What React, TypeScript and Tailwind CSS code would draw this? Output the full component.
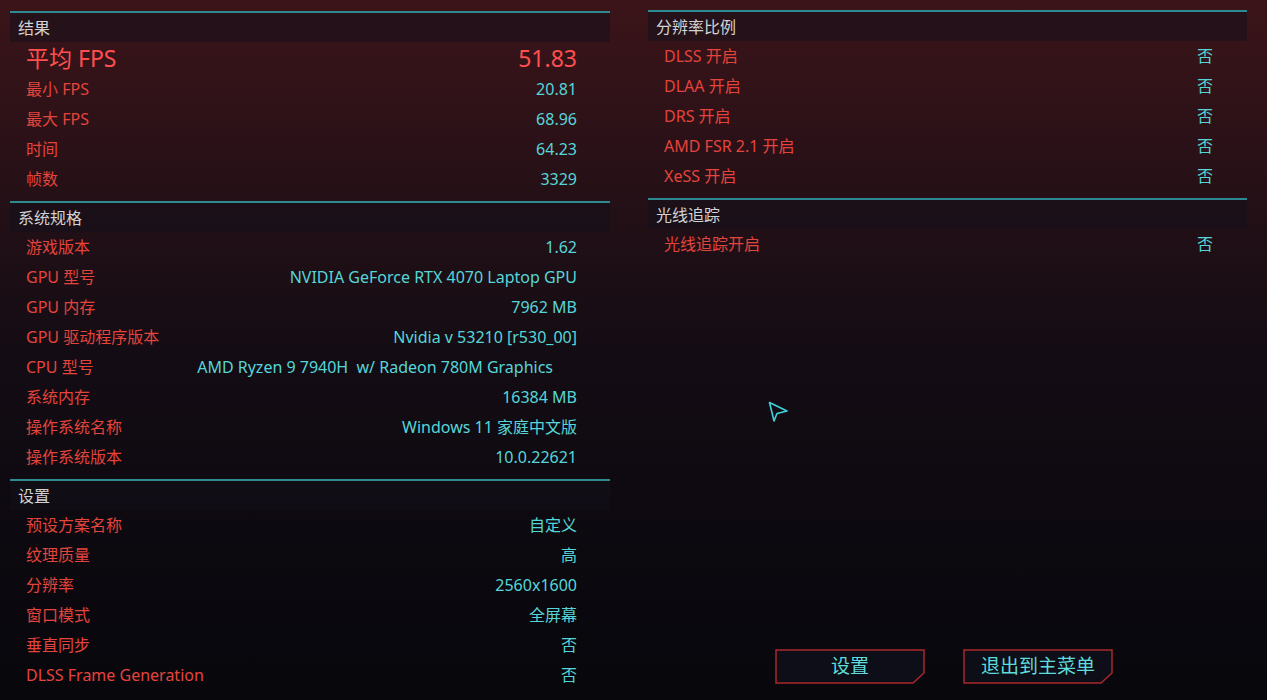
import React from "react";

const font = { fontFamily: '"Noto Sans", "Noto Sans CJK SC", sans-serif' };

type Row = [string, string];

const results: Row[] = [
  ["最小 FPS", "20.81"],
  ["最大 FPS", "68.96"],
  ["时间", "64.23"],
  ["帧数", "3329"],
];

const specs: Row[] = [
  ["游戏版本", "1.62"],
  ["GPU 型号", "NVIDIA GeForce RTX 4070 Laptop GPU"],
  ["GPU 内存", "7962 MB"],
  ["GPU 驱动程序版本", "Nvidia v 53210 [r530_00]"],
  ["CPU 型号", "AMD Ryzen 9 7940H  w/ Radeon 780M Graphics"],
  ["系统内存", "16384 MB"],
  ["操作系统名称", "Windows 11 家庭中文版"],
  ["操作系统版本", "10.0.22621"],
];

const settings: Row[] = [
  ["预设方案名称", "自定义"],
  ["纹理质量", "高"],
  ["分辨率", "2560x1600"],
  ["窗口模式", "全屏幕"],
  ["垂直同步", "否"],
  ["DLSS Frame Generation", "否"],
];

const scaling: Row[] = [
  ["DLSS 开启", "否"],
  ["DLAA 开启", "否"],
  ["DRS 开启", "否"],
  ["AMD FSR 2.1 开启", "否"],
  ["XeSS 开启", "否"],
];

function Header({ title }: { title: string }) {
  return (
    <div className="h-[31px] flex items-center pl-2 border-t-2 border-[#2c8a90] bg-[#120f1a]/50 text-[16px] text-[#d2d2d2]">
      {title}
    </div>
  );
}

function StatRow({ label, value, pr = "pr-[33px]" }: { label: string; value: string; pr?: string }) {
  return (
    <div className={`h-[30px] flex items-center justify-between pl-4 ${pr} text-[16px]`}>
      <span className="text-[#e4443c]">{label}</span>
      <span className="text-[#56d6d8] whitespace-pre">{value}</span>
    </div>
  );
}

function MenuButton({ label }: { label: string }) {
  return (
    <button className="relative w-[150px] h-[35px] flex items-center justify-center text-[19px] text-[#5fdcdc]">
      <svg className="absolute inset-0" width="150" height="35" viewBox="0 0 150 35">
        <path d="M1 1 H149 V24 L138 34 H1 Z" fill="#0d0e17" stroke="#a8282b" strokeWidth="1.5" />
      </svg>
      <span className="relative">{label}</span>
    </button>
  );
}

export default function App() {
  return (
    <div
      style={font}
      className="relative w-[1267px] h-[700px] overflow-hidden bg-gradient-to-b from-[#3b1419] via-[#140c14] to-[#07070c] flex pl-[10px] pr-[20px] gap-[38px]"
    >
      {/* left column */}
      <div className="w-[600px] flex flex-col pt-[11px]">
        <Header title="结果" />
        <div className="h-[32px] flex items-center justify-between pl-4 pr-[33px] text-[23px] text-[#ff4f4f]">
          <span>平均 FPS</span>
          <span>51.83</span>
        </div>
        {results.map(([l, v]) => (
          <StatRow key={l} label={l} value={v} />
        ))}
        <div className="h-[7px]" />
        <Header title="系统规格" />
        {specs.map(([l, v]) => (
          <StatRow key={l} label={l} value={v} pr={l === "CPU 型号" ? "pr-[57px]" : "pr-[33px]"} />
        ))}
        <div className="h-[7px]" />
        <Header title="设置" />
        {settings.map(([l, v]) => (
          <StatRow key={l} label={l} value={v} />
        ))}
      </div>

      {/* right column */}
      <div className="flex-1 flex flex-col pt-[10px]">
        <Header title="分辨率比例" />
        {scaling.map(([l, v]) => (
          <StatRow key={l} label={l} value={v} pr="pr-[34px]" />
        ))}
        <div className="h-[7px]" />
        <Header title="光线追踪" />
        <StatRow label="光线追踪开启" value="否" pr="pr-[34px]" />
        <div className="mt-auto mb-[16px] pl-[127px] flex gap-[38px]">
          <MenuButton label="设置" />
          <MenuButton label="退出到主菜单" />
        </div>
      </div>

      {/* mouse cursor */}
      <svg className="absolute left-[767px] top-[400px]" width="24" height="24" viewBox="0 0 24 24">
        <path d="M2.5 2.5 L20 11 L10 13.5 L7 21 Z" fill="none" stroke="#3fd2dc" strokeWidth="1.6" strokeLinejoin="round" />
      </svg>
    </div>
  );
}
